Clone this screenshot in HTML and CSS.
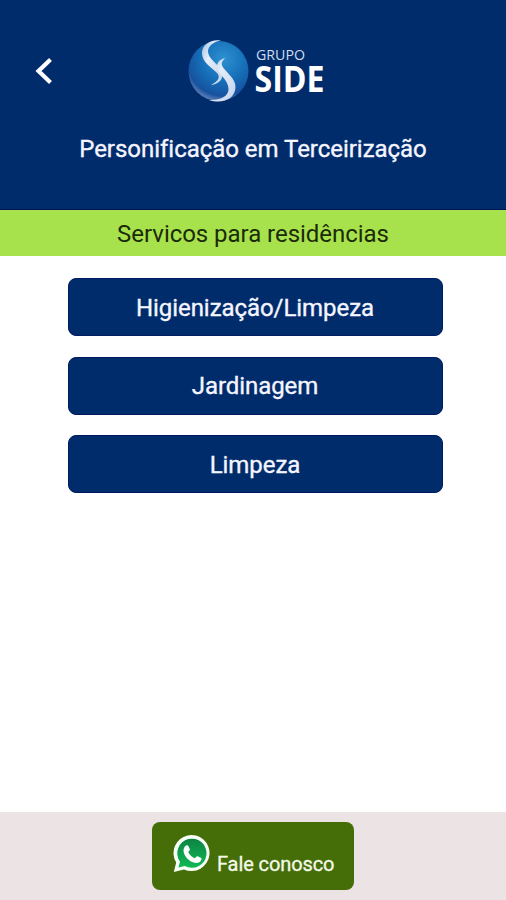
FILE: index.html
```html
<!DOCTYPE html>
<html lang="pt-BR">
<head>
<meta charset="utf-8">
<title>Grupo Side</title>
<link rel="stylesheet" href="styles.css">
</head>
<body>
<div class="app">
  <header class="header">
    <div class="bar">
      <svg class="back" viewBox="0 0 24 32"><path d="M18.5 4.5 6.5 16l12 11.5" fill="none" stroke="#fff" stroke-width="4.2"/></svg>
      <svg class="logo" viewBox="0 0 140 66">
        <defs>
          <radialGradient id="ball" cx=".58" cy=".3" r=".72">
            <stop offset="0" stop-color="#2d91d0"/>
            <stop offset=".5" stop-color="#1670b9"/>
            <stop offset=".85" stop-color="#17529f"/>
            <stop offset="1" stop-color="#6383b7"/>
          </radialGradient>
          <linearGradient id="ribbon" x1="0" y1="0" x2="1" y2="1">
            <stop offset="0" stop-color="#9dbfe0"/>
            <stop offset=".35" stop-color="#e4edfa"/>
            <stop offset="1" stop-color="#c3d2eb"/>
          </linearGradient>
        </defs>
        <circle cx="30.5" cy="33" r="30" fill="url(#ball)"/>
        <path d="M33 2.500C22 1 14 7 14 15c0 10 11 15 15.500 20.500C32.500 40 30 43 23 47c8-1 13-6 11-13C32 27 20 21 20 13.500 20 8 26 3.500 33 2.500Z" fill="url(#ribbon)"/>
        <path d="M37 20c-6 1.500-9.500 6-7.500 11 2 5.500 11 12 11 20 0 7-7.500 11.500-19.500 11 14 4.500 26-1.500 26.500-12.500C48 40 37 34 34 27.500c-1-2.500.5-5 3-7.500Z" fill="url(#ribbon)"/>
        <text class="logo-group" x="68" y="21.500" textLength="49" lengthAdjust="spacingAndGlyphs">GRUPO</text>
        <text class="logo-name" x="66.500" y="53.500" textLength="70" lengthAdjust="spacingAndGlyphs">SIDE</text>
      </svg>
    </div>
    <p class="tagline">Personificação em Terceirização</p>
  </header>
  <h1 class="section">Servicos para residências</h1>
  <main class="list">
    <button class="service">Higienização/Limpeza</button>
    <button class="service">Jardinagem</button>
    <button class="service">Limpeza</button>
  </main>
  <footer class="footer">
    <button class="contact">
      <svg class="whatsapp" viewBox="0 0 38 38">
        <defs><linearGradient id="wa" x1="0" y1="0" x2="0" y2="1"><stop offset="0" stop-color="#0c8442"/><stop offset="1" stop-color="#10b957"/></linearGradient></defs>
        <path d="M.8 37 3.200 27.500A18 18 0 1 1 11 34.400Z" fill="#f7fff7"/>
        <path d="M5.400 32.500 7 26.700A14.600 14.600 0 1 1 11.800 31Z" fill="url(#wa)"/>
        <path d="M13 10.500c.8-.5 2-.4 2.400.5l1.400 3.200c.4 1-1 2.200-1.600 2.900 1.400 2.900 3.600 5 6.700 6.200.8-.7 1.700-2.400 2.700-2l3.600 1.800c1 .5-.3 3.500-1.800 4.200-3 1.400-6.700.5-10.200-2C12.500 22.300 10.300 18.600 10.500 15c.1-1.800 1.300-3.800 2.500-4.500Z" fill="#fff"/>
      </svg>
      <span class="contact-label">Fale conosco</span>
    </button>
  </footer>
</div>
</body>
</html>
```
FILE: styles.css
```css
* { box-sizing: border-box; }
body { margin: 0; background: #fff; font-family: Roboto, "Liberation Sans", sans-serif; }
.app { display: flex; flex-direction: column; width: 506px; height: 900px; }
.header { height: 210px; background: #002c6b; color: #f5f5ff; padding-top: 38px; border-bottom: 1px solid #001257; }
.bar { display: flex; align-items: center; height: 66px; }
.back { width: 24px; height: 32px; margin-left: 32px; flex: none; }
.logo { width: 140px; height: 66px; margin-left: 132px; flex: none; overflow: visible; }
.logo-group { font: 14px "Open Sans", sans-serif; fill: #d0dcef; }
.logo-name { font: bold 36px "Open Sans", sans-serif; fill: #fff; }
.tagline { margin: 29px 0 0; font-size: 24px; line-height: 32px; letter-spacing: -.03px; text-align: center; white-space: nowrap; -webkit-text-stroke: .35px; }
.section { margin: 0; height: 46px; background: #a7e24c; color: #1b2b08; font-size: 24px; font-weight: 400; line-height: 49px; letter-spacing: -.04px; text-align: center; }
.list { flex: 1; display: flex; flex-direction: column; align-items: center; gap: 20.5px; padding: 22px 0 0 4px; }
.service { width: 375px; height: 58px; padding: 1px 0 0; border: 1px solid #001b62; border-radius: 8px; background: #002c6b; color: #f5f5ff; font: 24px/32px Roboto, sans-serif; letter-spacing: -.06px; -webkit-text-stroke: .35px; }
.footer { display: flex; justify-content: center; height: 88px; padding-top: 10px; background: #ebe3e4; }
.contact { display: flex; width: 202px; height: 68px; padding: 13px 0 0 20.5px; border: 0; border-radius: 8px; background: #456e08; color: #f4fae9; font: 20px/28px Roboto, sans-serif; }
.whatsapp { width: 38px; height: 38px; flex: none; }
.contact-label { margin: 15px 0 0 6.5px; letter-spacing: -.1px; white-space: nowrap; -webkit-text-stroke: .3px; }
```
